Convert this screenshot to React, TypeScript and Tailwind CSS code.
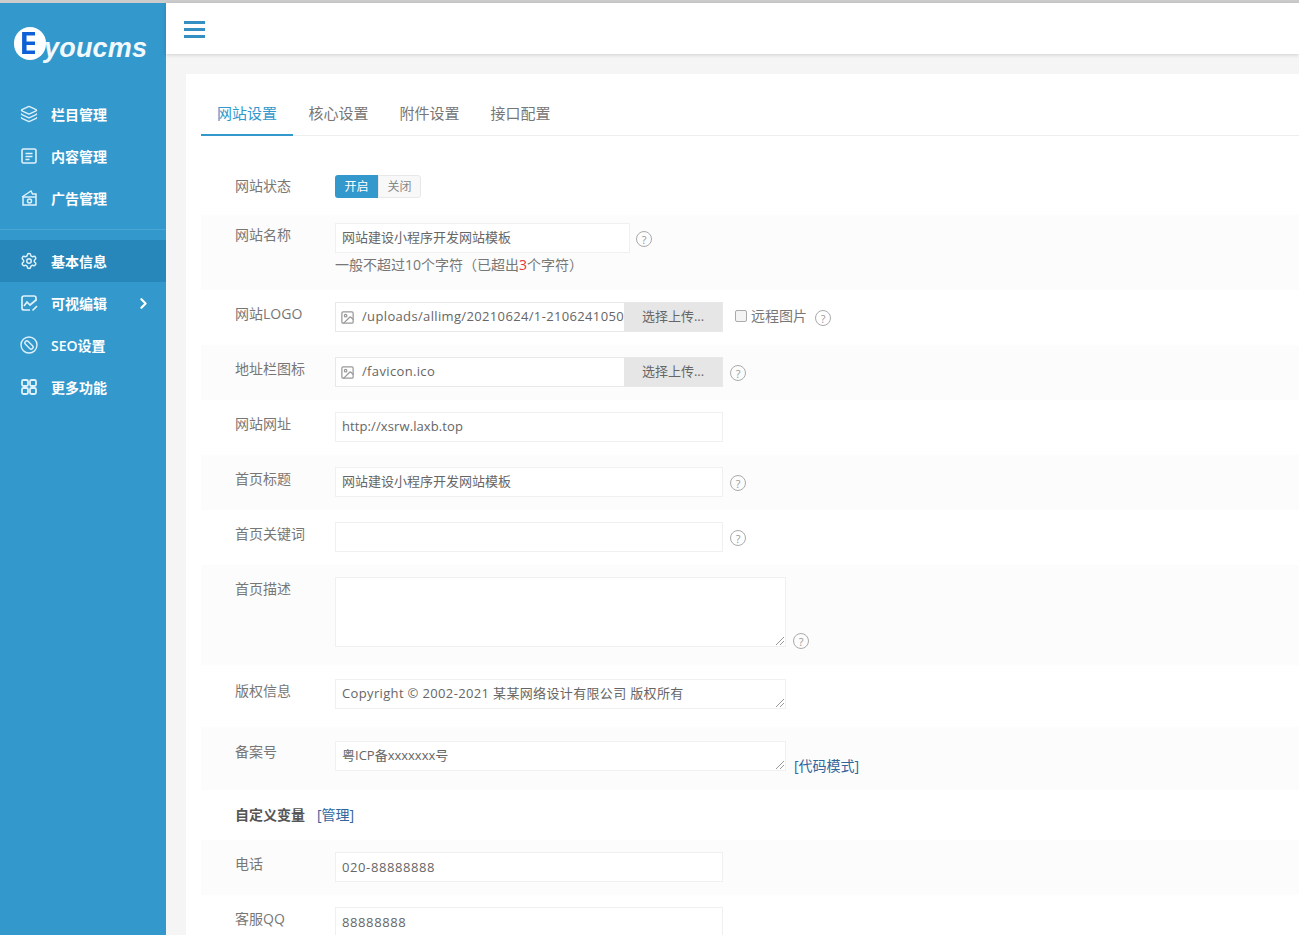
import React from "react";
import { Layers, Settings, ChevronRight, Image } from "lucide-react";

const font = "font-['Open_Sans','Noto_Sans_CJK_SC',sans-serif]";

const Help = ({ className = "" }: { className?: string }) => (
  <span className={`inline-flex items-center justify-center w-[16px] h-[16px] rounded-full border border-[#aaa] text-[11px] leading-none text-[#999] ${className}`}>?</span>
);

const DocIcon = () => (
  <svg width="18" height="18" viewBox="0 0 18 18" fill="none" stroke="currentColor" strokeWidth="1.6">
    <rect x="2" y="2" width="14" height="14" rx="1.5" />
    <path d="M5.5 6.5h7M5.5 9.5h7M5.5 12.5h4" />
  </svg>
);

const HouseIcon = () => (
  <svg width="18" height="18" viewBox="0 0 18 18" fill="none" stroke="currentColor" strokeWidth="1.5">
    <path d="M2 8l9-6 1.5 3H16v11H3V8" />
    <path d="M3 8h13" />
    <circle cx="9.5" cy="12" r="2" />
  </svg>
);

const ChartIcon = () => (
  <svg width="18" height="18" viewBox="0 0 18 18" fill="none" stroke="currentColor" strokeWidth="1.7">
    <path d="M16 7V4a2 2 0 0 0-2-2H4a2 2 0 0 0-2 2v10a2 2 0 0 0 2 2h6" />
    <path d="M4 12l3-4 3 3 6-5M12.5 16.5l4.5-4.5" />
  </svg>
);

const SeoIcon = () => (
  <svg width="18" height="18" viewBox="0 0 18 18" fill="none" stroke="currentColor" strokeWidth="1.4">
    <circle cx="9" cy="9" r="8" />
    <rect x="7" y="4" width="4" height="10" rx="2" transform="rotate(-45 9 9)" />
  </svg>
);

const GridIcon = () => (
  <svg width="18" height="18" viewBox="0 0 18 18" fill="none" stroke="currentColor" strokeWidth="1.8">
    <rect x="2" y="2" width="6" height="6" rx="1.5" />
    <rect x="10" y="2" width="6" height="6" rx="1.5" />
    <rect x="2" y="10" width="6" height="6" rx="1.5" />
    <rect x="10" y="10" width="6" height="6" rx="1.5" />
  </svg>
);

const NavItem = ({ icon, label, active, arrow }: { icon: React.ReactNode; label: string; active?: boolean; arrow?: boolean }) => (
  <div className={`flex items-center h-[42px] pl-5 pr-[14px] text-white text-[14px] font-semibold ${active ? "bg-[#2787ba]" : ""}`}>
    <span className="w-[18px] flex justify-center mr-[13px] text-[#dff1fb]">{icon}</span>
    <span className="flex-1">{label}</span>
    {arrow && <ChevronRight size={17} strokeWidth={3} />}
  </div>
);

const Row = ({ label, children, shade, h, bold, top = "pt-[14px]", body = "pt-[12px]" }: { label: React.ReactNode; children?: React.ReactNode; shade?: boolean; h: string; bold?: boolean; top?: string; body?: string }) => (
  <div className={`flex ${h} ${shade ? "bg-[#fcfcfc]" : "bg-white"}`}>
    <div className={`w-[134px] pl-[34px] ${top} text-[14px] leading-5 whitespace-nowrap ${bold ? "text-[#555] font-semibold" : "text-[#777]"}`}>{label}</div>
    <div className={`flex-1 ${body} min-w-0`}>{children}</div>
  </div>
);

const Input = ({ value, w, mono }: { value?: string; w: string; mono?: boolean }) => (
  <div className={`${w} h-[30px] px-[6px] flex items-center bg-white border border-[#f0f0f0] text-[13px] text-[#666] whitespace-nowrap overflow-hidden ${mono ? "tracking-[0.6px] pt-[1px]" : ""}`}>{value}</div>
);

const Grip = () => (
  <svg className="absolute right-0 bottom-0" width="10" height="10" viewBox="0 0 10 10" stroke="#999" strokeWidth="1">
    <path d="M1 9l8-8M5 9l4-4" />
  </svg>
);

const Area = ({ value, h, tracking = "" }: { value?: string; h: string; tracking?: string }) => (
  <div className={`relative w-[451px] ${h} px-[6px] pt-[3px] bg-white border border-[#f0f0f0] text-[13px] leading-5 text-[#666] whitespace-nowrap ${tracking}`}>
    {value}
    <Grip />
  </div>
);

const Upload = ({ value }: { value: string }) => (
  <div className="w-[388px] h-[30px] flex bg-white border border-[#e8e8e8]">
    <div className="w-[288px] flex items-center pl-1 overflow-hidden whitespace-nowrap text-[13px] tracking-[0.35px] text-[#666]">
      <Image size={15} className="text-[#999] mr-[7px] shrink-0" />
      {value}
    </div>
    <div className="flex-1 flex items-center justify-center bg-[#e6e6e6] text-[13px] text-[#666]">选择上传...</div>
  </div>
);

export default function App() {
  return (
    <div className={`${font} h-[935px] overflow-hidden bg-[#f5f5f5] flex flex-col`}>
      <div className="h-[3px] bg-[#ccc] shrink-0" />
      <div className="flex flex-1 min-h-0">
        {/* Sidebar */}
        <div className="w-[166px] bg-[#3398cc] shrink-0">
          <div className="h-[90px] pt-[24px] pl-[14px] flex items-start">
            <div className="w-[32px] h-[33px] rounded-full bg-white flex items-center pl-[6px] shrink-0">
              <span className="text-[31px] font-bold leading-none font-['Liberation_Sans',sans-serif] bg-[linear-gradient(90deg,#0f5fd6_70%,#f4fafe_70%)] bg-clip-text text-transparent">E</span>
            </div>
            <span className="ml-[-2px] mt-[5px] text-[#f2f9fd] italic font-bold text-[27px] leading-8 tracking-[0.2px] font-['Liberation_Sans',sans-serif]">youcms</span>
          </div>
          <NavItem icon={<Layers size={18} strokeWidth={1.8} />} label="栏目管理" />
          <NavItem icon={<DocIcon />} label="内容管理" />
          <NavItem icon={<HouseIcon />} label="广告管理" />
          <div className="h-px bg-[#4aa5d4] mt-[10px] mb-[10px]" />
          <NavItem icon={<Settings size={18} />} label="基本信息" active />
          <NavItem icon={<ChartIcon />} label="可视编辑" arrow />
          <NavItem icon={<SeoIcon />} label="SEO设置" />
          <NavItem icon={<GridIcon />} label="更多功能" />
        </div>

        {/* Main */}
        <div className="flex-1 min-w-0">
          <div className="h-[51px] bg-white shadow-[0_1px_4px_rgba(0,0,0,0.15)] flex items-center pl-[18px]">
            <div className="w-[21px] flex flex-col gap-[4px] mt-[1px]">
              <div className="h-[3px] bg-[#3390c2]" />
              <div className="h-[3px] bg-[#3390c2]" />
              <div className="h-[3px] bg-[#3390c2]" />
            </div>
          </div>
          <div className="ml-[20px] mt-[20px] bg-white pl-[15px] h-[900px]">
            <div className="flex h-[62px] border-b border-[#eee] text-[15px] text-[#777] items-end">
              <div className="w-[92px] h-[44px] -mb-px border-b-2 border-[#3398cc] text-[#3398cc] flex items-center justify-center">网站设置</div>
              <div className="w-[91px] h-[44px] flex items-center justify-center">核心设置</div>
              <div className="w-[91px] h-[44px] flex items-center justify-center">附件设置</div>
              <div className="w-[91px] h-[44px] flex items-center justify-center">接口配置</div>
            </div>
            <div className="pt-[24px]">
              <Row label="网站状态" h="h-[55px]" top="pt-[16px]" body="pt-[15px]">
                <div className="flex w-[86px] h-[23px] text-[12px]">
                  <div className="w-[43px] bg-[#3398cc] text-white rounded-l-[3px] flex items-center justify-center">开启</div>
                  <div className="w-[43px] bg-[#f8f8f8] border border-[#e8e8e8] text-[#888] rounded-r-[3px] flex items-center justify-center">关闭</div>
                </div>
              </Row>
              <Row label="网站名称" h="h-[75px]" shade top="pt-[10px]" body="pt-[8px]">
                <div className="flex items-center">
                  <Input w="w-[295px]" value="网站建设小程序开发网站模板" />
                  <Help className="ml-[6px] mt-[2px]" />
                </div>
                <div className="text-[14px] leading-5 text-[#777] mt-[2px]">一般不超过10个字符（已超出<span className="text-[#e53935]">3</span>个字符）</div>
              </Row>
              <Row label="网站LOGO" h="h-[55px]">
                <div className="flex items-center">
                  <Upload value="/uploads/allimg/20210624/1-2106241050" />
                  <span className="w-[12px] h-[12px] border border-[#aaa] rounded-[2px] bg-[#f4f4f4] ml-[12px] -mt-[3px]" />
                  <span className="ml-[4px] text-[14px] text-[#777] -mt-[3px]">远程图片</span>
                  <Help className="ml-[8px] mt-[2px]" />
                </div>
              </Row>
              <Row label="地址栏图标" h="h-[55px]" shade>
                <div className="flex items-center">
                  <Upload value="/favicon.ico" />
                  <Help className="ml-[7px] mt-[2px]" />
                </div>
              </Row>
              <Row label="网站网址" h="h-[55px]">
                <div className="tracking-[0.1px]">
                  <Input w="w-[388px]" value="http://xsrw.laxb.top" />
                </div>
              </Row>
              <Row label="首页标题" h="h-[55px]" shade>
                <div className="flex items-center">
                  <Input w="w-[388px]" value="网站建设小程序开发网站模板" />
                  <Help className="ml-[7px] mt-[2px]" />
                </div>
              </Row>
              <Row label="首页关键词" h="h-[55px]">
                <div className="flex items-center">
                  <Input w="w-[388px]" />
                  <Help className="ml-[7px] mt-[2px]" />
                </div>
              </Row>
              <Row label="首页描述" h="h-[100px]" shade>
                <div className="flex items-end">
                  <Area h="h-[70px]" />
                  <Help className="ml-[7px] mb-[-2px]" />
                </div>
              </Row>
              <Row label="版权信息" h="h-[62px]" top="pt-[16px]" body="pt-[14px]">
                <Area h="h-[30px]" value="Copyright © 2002-2021 某某网络设计有限公司 版权所有" tracking="tracking-[0.35px]" />
              </Row>
              <Row label="备案号" h="h-[63px]" shade top="pt-[15px]" body="pt-[14px]">
                <div className="flex items-end">
                  <Area h="h-[30px]" value="粤ICP备xxxxxxx号" />
                  <span className="ml-[8px] text-[14px] leading-4 mb-[-3px] text-[#31659c]">[代码模式]</span>
                </div>
              </Row>
              <Row label={<span className="flex gap-3">自定义变量<span className="text-[#31659c] font-normal">[管理]</span></span>} h="h-[50px]" bold top="pt-[15px]" />
              <Row label="电话" h="h-[55px]" shade>
                <Input w="w-[388px]" value="020-88888888" mono />
              </Row>
              <Row label="客服QQ" h="h-[55px]">
                <Input w="w-[388px]" value="88888888" mono />
              </Row>
            </div>
          </div>
        </div>
      </div>
    </div>
  );
}
